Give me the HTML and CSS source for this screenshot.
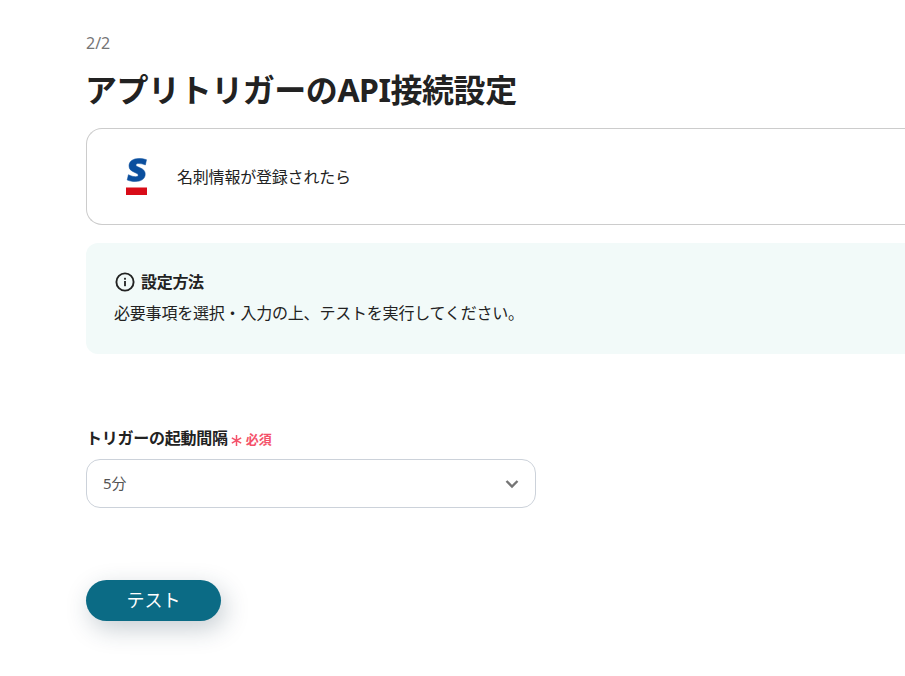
FILE: index.html
```html
<!DOCTYPE html>
<html lang="ja">
<head>
<meta charset="utf-8">
<title>アプリトリガーのAPI接続設定</title>
<link rel="stylesheet" href="styles.css">
</head>
<body>
<main class="page">
  <p class="step">2/2</p>
  <h1 class="title">アプリトリガーのAPI接続設定</h1>
  <section class="app-card">
    <svg class="logo" width="22" height="38" viewBox="0 0 22 38" aria-hidden="true">
      <path class="logo-s" d="M20.5 1.7 19.4 6.9C17 6 14.6 5.5 12.6 5.5 10.8 5.5 9.9 6.1 9.9 7 9.9 8 11 8.5 13.4 9.5 17.4 11.1 19.2 12.9 19.2 16.1 19.2 20.9 15.2 23.5 9.2 23.5 6.2 23.5 3.2 22.9 1.2 22L2.4 16.7C4.8 17.9 7.4 18.7 9.6 18.7 11.4 18.7 12.2 18.1 12.2 17.1 12.2 16.1 11.2 15.5 8.8 14.5 5 12.9 3 11.1 3 7.9 3 3.3 7 .5 12.8 .5 15.8 .5 18.4 .9 20.5 1.7Z"/>
      <rect class="logo-bar" x="0" y="29.5" width="21" height="7.5"/>
    </svg>
    <span class="app-card-text">名刺情報が登録されたら</span>
  </section>
  <section class="info">
    <div class="info-head">
      <svg class="info-icon" width="20" height="20" viewBox="0 0 20 20" aria-hidden="true">
        <circle cx="10" cy="10" r="8.6" fill="none" stroke="#222" stroke-width="1.9"/>
        <rect x="9.1" y="9" width="1.8" height="5.2" fill="#222"/>
        <rect x="9.1" y="5.8" width="1.8" height="1.9" fill="#222"/>
      </svg>
      <span class="info-title">設定方法</span>
    </div>
    <p class="info-text">必要事項を選択・入力の上、テストを実行してください。</p>
  </section>
  <section class="field">
    <div class="field-label">
      <span class="label-text">トリガーの起動間隔</span>
      <span class="required">
        <svg class="asterisk" width="11" height="11" viewBox="0 0 11 11" aria-hidden="true">
          <path d="M5.5 0V11M.8 2.8 10.2 8.2M10.2 2.8.8 8.2" fill="none" stroke="#f4526a" stroke-width="1.5"/>
        </svg>
        必須
      </span>
    </div>
    <div class="select">
      <span class="select-value">5分</span>
      <svg class="chevron" width="14" height="10" viewBox="0 0 14 10" aria-hidden="true">
        <path d="M1.5 2 7 7.5 12.5 2" fill="none" stroke="#757575" stroke-width="2.4"/>
      </svg>
    </div>
  </section>
  <button class="test-button" type="button">テスト</button>
</main>
</body>
</html>
```
FILE: styles.css
```css
* { box-sizing: border-box; }
html, body { margin: 0; padding: 0; height: 100%; overflow: hidden; background: #fff; }
body {
  font-family: "Noto Sans", "Noto Sans CJK JP", sans-serif;
  color: #222;
}
.page {
  width: 819px;
  margin-left: 86px;
  padding-top: 33px;
  display: flex;
  flex-direction: column;
}
.step { margin: 0; font-size: 16px; line-height: 20px; color: #757575; }
.title {
  margin: 15px 0 0 -1px;
  font-size: 32px;
  line-height: 44px;
  font-weight: 700;
  letter-spacing: -0.45px;
  color: #222;
}
.app-card {
  margin-top: 16px;
  height: 97px;
  border: 1px solid #ccc;
  border-right: 0;
  border-radius: 16px 0 0 16px;
  display: flex;
  align-items: center;
  padding-left: 39px;
  gap: 30px;
}
.logo { flex: none; }
.logo-s { fill: #0b4f9e; stroke: #0b4f9e; stroke-width: 0.5; }
.logo-bar { fill: #d80c18; }
.app-card-text { font-size: 16px; line-height: 24px; letter-spacing: -0.2px; margin-left: -1px; }
.info {
  margin-top: 18px;
  height: 111px;
  background: #f2faf9;
  border-radius: 12px 0 0 12px;
  padding: 27px 28px 0;
}
.info-head { display: flex; align-items: center; gap: 6px; height: 24px; }
.info-icon { flex: none; margin-left: 1px; }
.info-title { font-size: 16px; font-weight: 700; line-height: 24px; letter-spacing: -0.3px; }
.info-text { margin: 7px 0 0; font-size: 16px; line-height: 24px; letter-spacing: -0.2px; }
.field { margin-top: 73px; display: flex; flex-direction: column; }
.field-label { display: flex; align-items: center; gap: 3px; height: 22px; }
.label-text { font-size: 16px; font-weight: 700; line-height: 22px; letter-spacing: -0.25px; }
.required { display: flex; align-items: center; gap: 4px; font-size: 13px; font-weight: 700; color: #f4526a; }
.asterisk { flex: none; margin-top: 5px; }
.select {
  margin-top: 10px;
  width: 450px;
  height: 49px;
  border: 1px solid #ccd2da;
  border-radius: 14px;
  display: flex;
  align-items: center;
  justify-content: space-between;
  padding: 0 16px;
}
.select-value { font-size: 15px; color: #555; margin-top: -2px; }
.test-button {
  margin-top: 72px;
  width: 135px;
  height: 41px;
  border: 0;
  border-radius: 21px;
  background: #0b6b85;
  color: #fff;
  font-family: inherit;
  font-size: 18px;
  padding: 0 0 4px;
  box-shadow: 4px 8px 24px rgba(30, 60, 80, 0.25);
}
```
